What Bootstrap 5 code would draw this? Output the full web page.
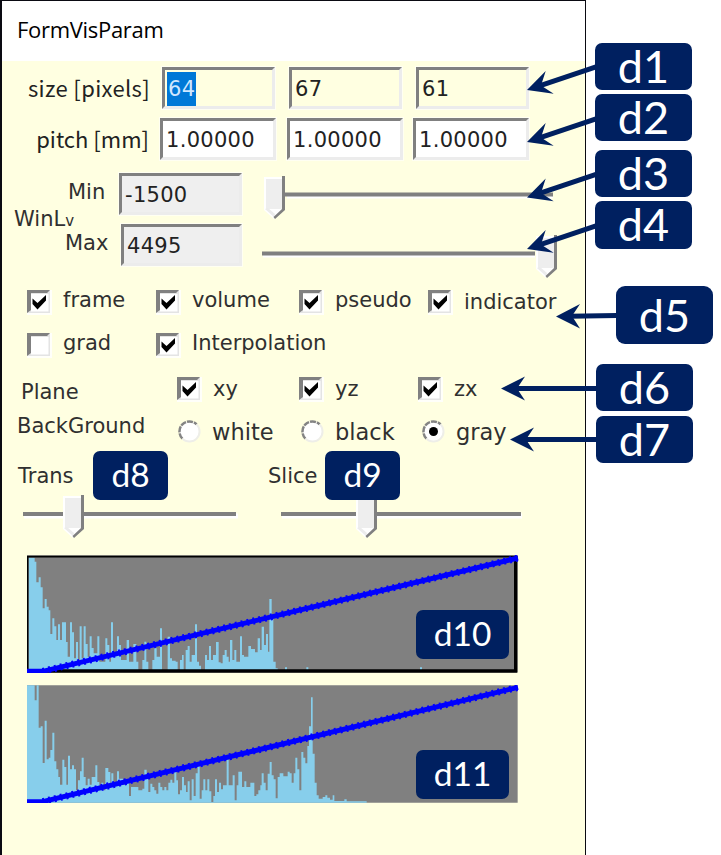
<!DOCTYPE html>
<html lang="en">
<head>
<meta charset="utf-8">
<meta name="viewport" content="width=device-width, initial-scale=1">
<title>FormVisParam</title>
<link href="https://cdn.jsdelivr.net/npm/bootstrap@5.3.0/dist/css/bootstrap.min.css" rel="stylesheet">
<style>
body{width:721px;height:855px;background:#fff;color:#303030;font:21px/24px "DejaVu Sans",Verdana,sans-serif;overflow:hidden}
.win{width:586px;height:855px;border:solid #0a0a12;border-width:1px 1px 0 2px;background:#ffffe1}
.titlebar{height:60px;padding:0 0 4px 15px;font:22px "Open Sans","Segoe UI",sans-serif;letter-spacing:-.3px;color:#000}
.rowgrid{display:grid;justify-content:start;align-items:start;white-space:nowrap}
.g-size{grid-template-columns:160px 127px 127px 115px;height:52px;padding-top:6px}
.g-pitch{grid-template-columns:158px 127px 126px 116px;height:60px;padding-top:5px}
.g-win{grid-template-columns:117px 140px 310px;grid-template-rows:51px 56px;height:112px}
.g-check{grid-template-columns:25px 129px 143px 129px 140px;height:43px;padding-top:5px}
.g-plane{grid-template-columns:175px 122px 119px 140px;height:43px;padding-top:6px}
.g-back{grid-template-columns:176px 123px 121px 140px;height:43px;padding-top:6px}
.cap-jp{font-family:"Noto Sans CJK JP",sans-serif;font-size:22px;color:#222;text-align:right;padding:8px 11px 0 0}
.cap-size{padding-right:12px;letter-spacing:.35px}
.field{height:42px;border:3px solid;border-color:#808080 #ececec #ececec #808080;outline:1px solid #fffff2;padding:7px 0 0 3px;background:#fff;color:#222;letter-spacing:.3px}
.field-flat{background:#ffffe1}.field-dim{background:#efefef}
.w113{width:113px}.w116{width:116px}.w123{width:123px}.w121{width:121px;margin-left:2px}
.sel{background:#0078d7;color:#cfe7ff;display:inline-block;height:34px;line-height:34px;padding:0 1px;margin:-5px 0 0 -1px;vertical-align:top}
.cap-min{margin:7px 0 0 66px}.cap-win{margin:3px 0 0 12px}.cap-win small{font-size:15px}.cap-max{margin:7px 0 0 63px}
.cap-plane{padding:3px 0 0 19px}.cap-back{margin:-6px 0 0 15px}.cap-trans{padding:7px 0 0 16px}
.opt{display:flex;align-items:flex-start}
.opt svg{flex:none}
.opt span{margin-left:11px}
.up{margin-top:-2px}
.g-back .opt span{font-size:22.5px;margin-left:10px}
.sliders{height:98px}.sliders svg{display:block;margin-top:2px}
.half-l{width:250px}.half-r{width:290px}
.tag{display:flex;align-items:center;justify-content:center;background:#002060;color:#fff;border-radius:7px;width:97px;height:47px;font:45px/1 Lato,Calibri,sans-serif;padding-bottom:1px}
.tag-sm{width:75px;height:49px;font-size:33.5px;padding-bottom:2px;position:absolute;z-index:2}
.tag-d4{height:48px}
.tag-d5{margin:37px 0 0 21px;height:58px;border-radius:9px;padding-top:1px}
.tag-d6{margin:20px 0 0 1px}.tag-d7{margin:5px 0 0 1px}
.gap4{margin-top:4px}.gap9{margin-top:9px}
.at8{left:93px;top:451px}.at9{left:325px;top:451px}
.at10{left:416px;top:610px;width:93px}.at11{left:416px;top:750px;width:93px}
.side{padding:43px 0 0 9px}
.over{position:absolute;left:0;top:0;z-index:3}
.plot{display:block;margin:0 0 12px 25px}
</style>
<script src="https://cdn.jsdelivr.net/npm/bootstrap@5.3.0/dist/js/bootstrap.bundle.min.js"></script>
</head>
<body>
<svg class="d-none">
 <symbol id="box" viewBox="0 0 25 25"><path fill="#fffffa" d="M0 0h25v25H0z"/><path fill="#e4e4e4" d="M0 0h23v23H0z"/><path fill="#808080" d="M0 0h23l-3 3H4v17l-4 3z"/><path fill="#fff" d="M4 4h17.500v17.500H4z"/></symbol>
 <symbol id="tick" viewBox="0 0 25 25"><use href="#box"/><path fill="#000" d="M5.500 8.500l5 4.500 8.500-8v5.500l-8.500 9-5-5.500z"/></symbol>
 <symbol id="radio" viewBox="0 0 24 24"><circle cx="11.500" cy="11.500" r="10" fill="#fff"/><path d="M4.400 18.600A10 10 0 0 1 18.600 4.400" fill="none" stroke="#848484" stroke-width="2.500" stroke-dasharray="6 1"/><path d="M18.600 4.400A10 10 0 0 1 4.400 18.600" fill="none" stroke="#eeeee8" stroke-width="2"/></symbol>
 <symbol id="thumb" viewBox="0 0 22 44"><path fill="#fff" d="M0 1h20v33l-10 9-10-9z"/><path fill="#eee" d="M2 3h16v30H2z"/><path fill="#ececec" d="M1 33l9 8 1-3-7-6z"/><path fill="#808080" d="M18 0h3v34L11 43l-1.500-2L18 33z"/></symbol>
</svg>
<div class="d-flex position-relative">
 <main class="win flex-shrink-0">
  <header class="titlebar d-flex align-items-center bg-white">FormVisParam</header>

  <div class="rowgrid g-size">
   <div class="cap-jp cap-size">size [pixels]</div>
   <div class="field field-flat w113"><span class="sel">64</span></div><div class="field field-flat w113">67</div><div class="field field-flat w113">61</div>
  </div>
  <div class="rowgrid g-pitch">
   <div class="cap-jp">pitch [mm]</div>
   <div class="field w116">1.00000</div><div class="field w116">1.00000</div><div class="field w116">1.00000</div>
  </div>

  <div class="rowgrid g-win">
   <div><div class="cap-min">Min</div><div class="cap-win">WinL<small>v</small></div></div>
   <div class="field field-dim w123">-1500</div>
   <svg width="305" height="50"><path d="M28 23h266" stroke="#fff" stroke-width="5"/><path d="M26 21.500h268" stroke="#808080" stroke-width="4"/><use href="#thumb" x="5" y="3" width="22" height="44"/></svg>
   <div class="cap-max">Max</div>
   <div class="field field-dim w121">4495</div>
   <svg width="305" height="56"><path d="M4 31h272" stroke="#fff" stroke-width="5"/><path d="M3 29.500h273" stroke="#808080" stroke-width="4"/><use href="#thumb" x="277" y="11" width="22" height="44"/></svg>
  </div>

  <div class="rowgrid g-check">
   <i></i>
   <label class="opt"><svg width="25" height="25"><use href="#tick"/></svg><span class="up">frame</span></label>
   <label class="opt"><svg width="25" height="25"><use href="#tick"/></svg><span class="up">volume</span></label>
   <label class="opt"><svg width="25" height="25"><use href="#tick"/></svg><span class="up">pseudo</span></label>
   <label class="opt"><svg width="25" height="25"><use href="#tick"/></svg><span>indicator</span></label>
  </div>
  <div class="rowgrid g-check">
   <i></i>
   <label class="opt"><svg width="25" height="25"><use href="#box"/></svg><span class="up">grad</span></label>
   <label class="opt"><svg width="25" height="25"><use href="#tick"/></svg><span class="up">Interpolation</span></label>
  </div>
  <div class="rowgrid g-plane">
   <div class="cap-plane">Plane</div>
   <label class="opt"><svg width="25" height="25"><use href="#tick"/></svg><span>xy</span></label>
   <label class="opt"><svg width="25" height="25"><use href="#tick"/></svg><span>yz</span></label>
   <label class="opt"><svg width="25" height="25"><use href="#tick"/></svg><span>zx</span></label>
  </div>
  <div class="rowgrid g-back">
   <div class="cap-back">BackGround</div>
   <label class="opt"><svg width="24" height="24"><use href="#radio"/></svg><span>white</span></label>
   <label class="opt"><svg width="24" height="24"><use href="#radio"/></svg><span>black</span></label>
   <label class="opt"><svg width="24" height="24"><use href="#radio"/><circle cx="11.500" cy="11.500" r="4.500"/></svg><span>gray</span></label>
  </div>

  <div class="d-flex sliders">
   <div class="half-l"><div class="cap-trans">Trans</div>
    <svg width="250" height="50"><path d="M22 26h214" stroke="#fff" stroke-width="5"/><path d="M21 24h213" stroke="#808080" stroke-width="4"/><use href="#thumb" x="61" y="5" width="22" height="44"/></svg></div>
   <div class="half-r"><div class="cap-trans">Slice</div>
    <svg width="290" height="50"><path d="M30 26h240" stroke="#fff" stroke-width="5"/><path d="M29 24h240" stroke="#808080" stroke-width="4"/><use href="#thumb" x="104" y="5" width="22" height="44"/></svg></div>
  </div>

  <svg class="plot" width="492" height="118" viewBox="81 30 1476 354">
   <path fill="#808080" d="M81 31H1553V382H81z"/>
   <path fill="#87ceeb" d="M86 375V38H104V50H109V112H116V97H122V127H128V190H134V162H140V185H146V196H151V267H157V220H163V244H169V285H174V238H180V285H186V232H198V291H203V335H210V232H216V262H222V340H228V291H234V345H239V244H245V340H251V244H257V297H263V335H269V274H275V309H281V325H292V274H298V350H316V280H322V300H328V350H333V232H339V330H351V274H357V300H363V345H380V285H387V350H400V297H409V350H415V375H427V345H433V290H439V350H445V375H457V345H463V310H470V335H480V250H486V375H503V275H510V340H516V347H527V350H533V375H540V345H546V330H551V375H557V315H563V303H569V350H575V330H585V238H591V350H597V362H603V375H615V330H621V345H627V303H633V345H639V330H648V291H656V352H662V355H668V330H674V315H680V335H686V350H690V285H697V345H703V315H709V350H720V274H726V330H732V335H745V303H753V312H765V322H773V280H780V315H785V245H792V300H798V267H804V320H808V162H815V220H820V350H827V370H833V375M855 375v-8h6v8zM919 375v-8h6v8zM1260 375v-8h6v8z"/>
   <path fill="none" stroke="#000" stroke-width="5" d="M83 382V35H1552"/><path fill="none" stroke="#000" stroke-width="10" d="M83 378H1547V33"/>
   <g fill="none" stroke="#00f"><path stroke-width="15" d="M81 379H128L1554 39"/><path stroke-width="21" stroke-dasharray="6 12" d="M128 379L1554 39"/></g>
  </svg>
  <svg class="plot" width="492" height="118" viewBox="81 29 1476 354">
   <path fill="#808080" d="M81 30H1553V382H81z"/>
   <path fill="#87ceeb" d="M81 382V30H104V75H110V30H116V157H122V153H128V263H134V136H140V252H146V247H151V224H157V172H163V258H169V282H175V305H180V328H187V253H193V275H199V328H204V241H210V282H216V270H222V282H228V345H234V315H240V288H245V247H251V305H257V330H263V310H269V328H275V305H286V270H292V320H298V345H304V322H310V345H316V278H325V290H331V330H334V294H340V325H351V288H357V310H369V328H375V318H387V362H393V335H415V345H427V340H433V283H440V300H445V350H451V325H457V335H463V345H469V355H475V322H481V335H487V345H493V335H499V345H505V322H511V313H517V322H523V290H529V315H534V357H540V345H546V305H552V330H558V350H563V318H569V375H575V312H581V362H587V294H593V270H599V370H605V345H610V312H616V345H622V312H628V348H634V380H640V362H645V312H651V350H657V322H663V342H669V330H680V252H686V330H698V300H704V375H710V330H715V289H726V335H733V318H739V335H751V322H763V362H769V357H775V345H781V330H785V294H791V322H797V345H803V295H809V260H815V300H821V312H827V369H833V305H839V294H850V303H863V289H869V294H875V322H881V294H886V247H892V282H898V345H904V230H910V247H916V264H922V212H927V153H933V66H938V235H944V322H950V360H956V370H968V365H976V360H982V367H990V373H998V360H1003V377H1033V372H1040V378H1100V382z"/>
   <g fill="none" stroke="#00f"><path stroke-width="15" d="M81 379H128L1554 36"/><path stroke-width="21" stroke-dasharray="6 12" d="M128 379L1554 36"/></g>
  </svg>
 </main>

 <aside class="side">
  <div class="tag">d1</div>
  <div class="tag gap4">d2</div>
  <div class="tag gap9">d3</div>
  <div class="tag gap4 tag-d4">d4</div>
  <div class="tag tag-d5">d5</div>
  <div class="tag tag-d6">d6</div>
  <div class="tag tag-d7">d7</div>
 </aside>

 <div class="tag tag-sm at8">d8</div>
 <div class="tag tag-sm at9">d9</div>
 <div class="tag tag-sm at10">d10</div>
 <div class="tag tag-sm at11">d11</div>

 <svg class="over" width="721" height="855" fill="#002060" stroke="none">
  <g id="slant"><path d="M527 90L545.700 71 541 85.500 553.700 93.700z"/><path d="M538 86.300L596 66.800" stroke="#002060" stroke-width="5"/></g>
  <use href="#slant" y="52"/><use href="#slant" y="107.500"/><use href="#slant" y="159"/>
  <path d="M501 388.500L525 376.500 517 388.500 525 400.500z"/><path d="M514 388.500H597" stroke="#002060" stroke-width="5"/>
  <path d="M510 439.500L534 427.500 526 439.500 534 451.500z"/><path d="M523 439.500H597" stroke="#002060" stroke-width="5"/>
  <path d="M556 316.500L580 304 572 316 580 328.500z"/><path d="M569 316.200L617 315.500" stroke="#002060" stroke-width="5"/>
 </svg>
</div>
</body>
</html>
